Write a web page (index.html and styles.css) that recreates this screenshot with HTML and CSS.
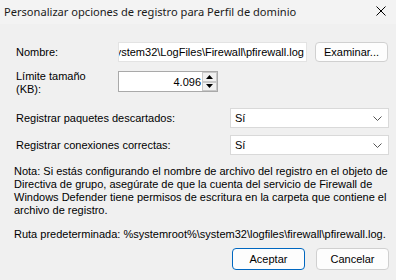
FILE: index.html
```html
<!DOCTYPE html>
<html lang="es">
<head>
<meta charset="utf-8">
<link rel="stylesheet" href="styles.css">
</head>
<body>
<div class="dialog">
  <div class="titlebar">
    <span class="title">Personalizar opciones de registro para Perfil de dominio</span>
    <svg class="close" width="10" height="10" viewBox="0 0 10 10"><path d="M0.5 0.5L9.5 9.5M9.5 0.5L0.5 9.5" stroke="#000" stroke-width="1"/></svg>
  </div>
  <div class="content">
    <div class="row row-name">
      <label class="label">Nombre:</label>
      <div class="textbox path"><span>%systemroot%\system32\LogFiles\Firewall\pfirewall.log</span></div>
      <button class="btn browse">Examinar...</button>
    </div>
    <div class="row row-size">
      <label class="label label-two">Límite tamaño<br>(KB):</label>
      <div class="numbox">
        <span class="num">4.096</span>
        <div class="spin">
          <div class="spin-btn"><svg width="7" height="4" viewBox="0 0 7 4"><path d="M0 4L3.5 0L7 4Z" fill="#000"/></svg></div>
          <div class="spin-btn"><svg width="7" height="4" viewBox="0 0 7 4"><path d="M0 0L3.5 4L7 0Z" fill="#000"/></svg></div>
        </div>
      </div>
    </div>
    <div class="row row-drop1">
      <label class="label label-wide">Registrar paquetes descartados:</label>
      <div class="combo"><span>Sí</span><svg width="9" height="5" viewBox="0 0 9 5"><path d="M0.5 0.5L4.5 4.5L8.5 0.5" fill="none" stroke="#555" stroke-width="1"/></svg></div>
    </div>
    <div class="row row-drop2">
      <label class="label label-wide">Registrar conexiones correctas:</label>
      <div class="combo"><span>Sí</span><svg width="9" height="5" viewBox="0 0 9 5"><path d="M0.5 0.5L4.5 4.5L8.5 0.5" fill="none" stroke="#555" stroke-width="1"/></svg></div>
    </div>
    <p class="note">Nota: Si estás configurando el nombre de archivo del registro en el objeto de Directiva de grupo, asegúrate de que la cuenta del servicio de Firewall de Windows Defender tiene permisos de escritura en la carpeta que contiene el archivo de registro.</p>
    <p class="path-note">Ruta predeterminada: %systemroot%\system32\logfiles\firewall\pfirewall.log.</p>
    <div class="actions">
      <button class="btn primary">Aceptar</button>
      <button class="btn">Cancelar</button>
    </div>
  </div>
</div>
</body>
</html>
```
FILE: styles.css
```css
* { box-sizing: border-box; }
html, body { margin: 0; padding: 0; }
body {
  width: 396px;
  height: 280px;
  overflow: hidden;
  background: #f0f0f0;
  font-family: "Liberation Sans", Arial, sans-serif;
  font-size: 11px;
  color: #000;
}
.dialog { display: flex; flex-direction: column; height: 280px; }
.titlebar {
  height: 24px;
  background: #f3f3f3;
  display: flex;
  align-items: center;
  justify-content: space-between;
  padding: 0 10px 0 4px;
}
.title {
  font-family: "Noto Sans", "Open Sans", sans-serif;
  font-size: 11.1px;
  color: #1a1a1a;
  position: relative;
  top: -1px;
}
.close { position: relative; top: -1px; }
.content {
  padding: 18px 7px 0 16px;
  display: flex;
  flex-direction: column;
}
.row { display: flex; align-items: center; }
.label { width: 102px; flex: none; }
.label-two { line-height: 13px; align-self: flex-start; padding-top: 3px; }
.label-wide { width: 214px; }
.textbox {
  height: 20px;
  background: #fff;
  border: 1px solid #e3e3e3;
  display: flex;
  align-items: center;
  overflow: hidden;
  white-space: nowrap;
}
.path { width: 189px; justify-content: flex-end; padding-right: 2px; }
.path span { flex: none; }
.btn {
  font-family: "Liberation Sans", Arial, sans-serif;
  font-size: 11px;
  color: #000;
  background: #fdfdfd;
  border: 1px solid #d0d0d0;
  border-radius: 4px;
  height: 21px;
  padding: 0;
}
.browse { width: 73px; margin-left: 8px; height: 20px; }
.row-size { margin-top: 5px; }
.numbox {
  width: 100px;
  height: 21px;
  background: #fff;
  border: 1px solid #a9a9a9;
  display: flex;
  align-items: center;
  justify-content: flex-end;
}
.num { margin-right: 1px; }
.spin {
  width: 15px;
  height: 19px;
  display: flex;
  flex-direction: column;
}
.spin-btn {
  flex: 1;
  background: #f0f0f0;
  border: 1px solid #c8c8c8;
  display: flex;
  align-items: center;
  justify-content: center;
}
.row-drop1 { margin-top: 12px; }
.row-drop2 { margin-top: 7px; }
.combo {
  width: 159px;
  height: 20px;
  background: #fff;
  border: 1px solid #d9d9d9;
  display: flex;
  align-items: center;
  justify-content: space-between;
  padding: 0 6px 0 4px;
}
.note {
  margin: 10px 0 0 -2px;
  line-height: 13px;
  width: 380px;
}
.path-note {
  margin: 11px 0 0 -2px;
  line-height: 13px;
}
.actions {
  display: flex;
  justify-content: flex-end;
  gap: 11px;
  margin-top: 7px;
}
.actions .btn { width: 73px; height: 22px; }
.primary { border-color: #0067c0; }
```
